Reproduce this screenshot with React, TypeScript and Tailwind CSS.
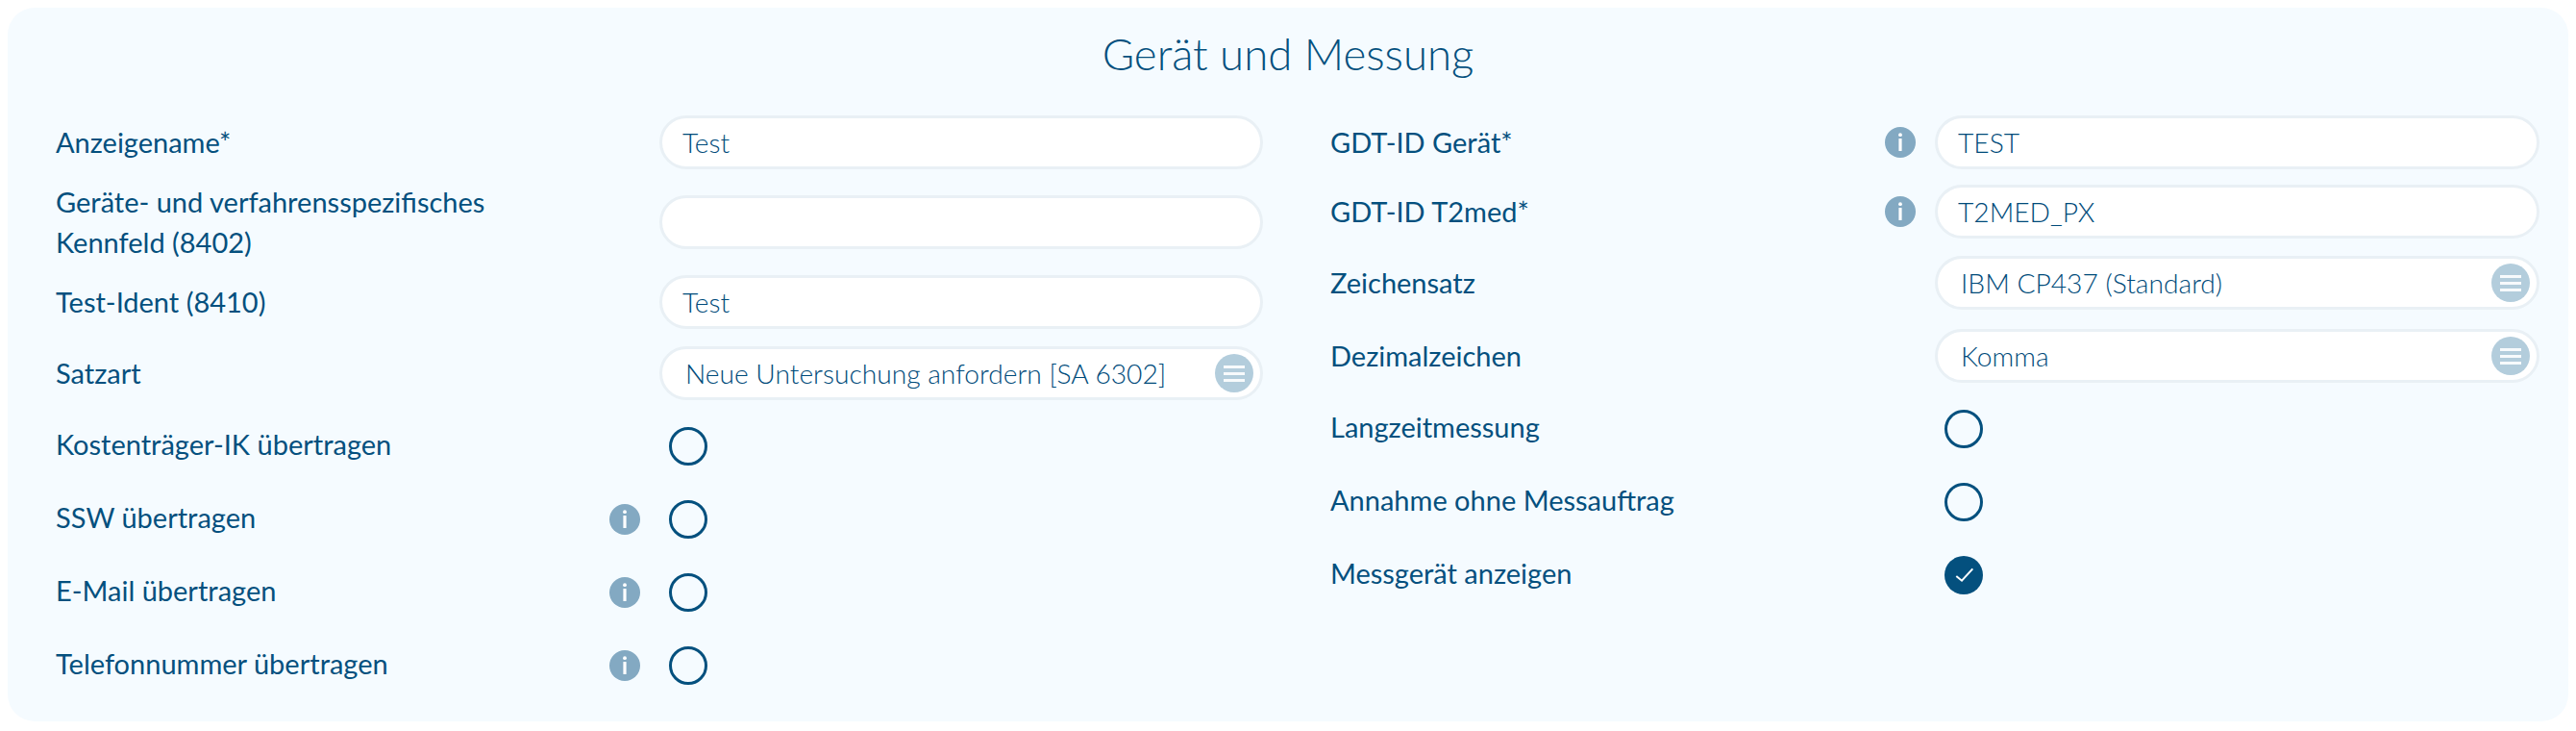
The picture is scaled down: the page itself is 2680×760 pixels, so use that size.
import React from "react";

const InfoIcon = () => (
  <svg viewBox="0 0 32 32" className="w-8 h-8 mr-5 shrink-0">
    <circle cx="16" cy="16" r="16" fill="#83a9c2" />
    <circle cx="16" cy="8.2" r="1.9" fill="#fff" />
    <rect x="14.4" y="12" width="3.2" height="13" rx="0.6" fill="#fff" />
  </svg>
);

const TextField = ({ value }: { value: string }) => (
  <input
    readOnly
    value={value}
    className="w-full h-14 rounded-full border-[3px] border-[#e9f0f5] bg-white pl-[21px] pr-4 text-[28.2px] font-light text-[#004b7a] outline-none"
  />
);

const SelectField = ({ value }: { value: string }) => (
  <div className="w-full h-14 rounded-full border-[3px] border-[#e9f0f5] bg-white pl-6 pr-[7px] flex items-center justify-between">
    <span className="text-[28.2px] font-light text-[#004b7a]">{value}</span>
    <span className="w-10 h-10 rounded-full bg-[#b3cddc] flex flex-col items-center justify-center gap-1">
      <span className="w-[22px] h-[3px] bg-white/90" />
      <span className="w-[22px] h-[3px] bg-white/90" />
      <span className="w-[22px] h-[3px] bg-white/90" />
    </span>
  </div>
);

const Radio = ({ checked }: { checked?: boolean }) =>
  checked ? (
    <svg viewBox="0 0 40 40" className="w-10 h-10 ml-[10px]">
      <circle cx="20" cy="20" r="20" fill="#04507e" />
      <polyline points="12.3,21 18,25.7 29.3,13.3" fill="none" stroke="#fff" strokeWidth="2" />
    </svg>
  ) : (
    <div className="w-10 h-10 ml-[10px] rounded-full border-[3px] border-[#04507e]" />
  );

const Row = ({
  label,
  info,
  wide,
  className,
  labelClass,
  children,
}: {
  label: React.ReactNode;
  info?: boolean;
  wide?: boolean;
  className?: string;
  labelClass?: string;
  children: React.ReactNode;
}) => (
  <div className={`flex items-center ${className ?? ""}`}>
    <div className={`flex-1 text-[29px] leading-[42px] text-[#04507e] ${labelClass ?? ""}`}>{label}</div>
    {info && <InfoIcon />}
    <div className={`${wide ? "w-[629px]" : "w-[628px]"} shrink-0 flex items-center`}>{children}</div>
  </div>
);

export default function App() {
  return (
    <div className="h-[760px] bg-white pt-2 px-2 font-['Lato','Noto_Sans',sans-serif]">
      <div className="h-[742px] rounded-[28px] bg-[#f5fbff] pl-[50px] pr-[30px]">
        <h1 className="-ml-[50px] -mr-[30px] h-[112px] pt-[18px] text-center text-[45.6px] leading-[60px] font-light text-[#04507e]">
          Gerät und Messung
        </h1>
        <div className="grid grid-cols-[1256px_1258px] gap-x-[70px]">
          {/* left column */}
          <div className="flex flex-col">
            <Row className="h-14" label="Anzeigename*">
              <TextField value="Test" />
            </Row>
            <Row
              className="mt-[27px] h-14"
              label={
                <>
                  Geräte- und verfahrensspezifisches
                  <br />
                  Kennfeld (8402)
                </>
              }
            >
              <TextField value="" />
            </Row>
            <Row className="mt-[27px] h-14" label="Test-Ident (8410)">
              <TextField value="Test" />
            </Row>
            <Row className="mt-[18px] h-14" label="Satzart">
              <SelectField value="Neue Untersuchung anfordern [SA 6302]" />
            </Row>
            <Row className="mt-[10px] h-[76px]" labelClass="-mt-1" label="Kostenträger-IK übertragen">
              <Radio />
            </Row>
            <Row className="h-[76px]" labelClass="-mt-1" label="SSW übertragen" info>
              <Radio />
            </Row>
            <Row className="h-[76px]" labelClass="-mt-1" label="E-Mail übertragen" info>
              <Radio />
            </Row>
            <Row className="h-[76px]" labelClass="-mt-1" label="Telefonnummer übertragen" info>
              <Radio />
            </Row>
          </div>
          {/* right column */}
          <div className="flex flex-col">
            <Row wide className="h-14" label="GDT-ID Gerät*" info>
              <TextField value="TEST" />
            </Row>
            <Row wide className="mt-4 h-14" label="GDT-ID T2med*" info>
              <TextField value="T2MED_PX" />
            </Row>
            <Row wide className="mt-[18px] h-14" label="Zeichensatz">
              <SelectField value="IBM CP437 (Standard)" />
            </Row>
            <Row wide className="mt-5 h-14" label="Dezimalzeichen">
              <SelectField value="Komma" />
            </Row>
            <Row wide className="mt-[10px] h-[76px]" labelClass="-mt-1" label="Langzeitmessung">
              <Radio />
            </Row>
            <Row wide className="h-[76px]" labelClass="-mt-1" label="Annahme ohne Messauftrag">
              <Radio />
            </Row>
            <Row wide className="h-[76px]" labelClass="-mt-1" label="Messgerät anzeigen">
              <Radio checked />
            </Row>
          </div>
        </div>
      </div>
    </div>
  );
}
